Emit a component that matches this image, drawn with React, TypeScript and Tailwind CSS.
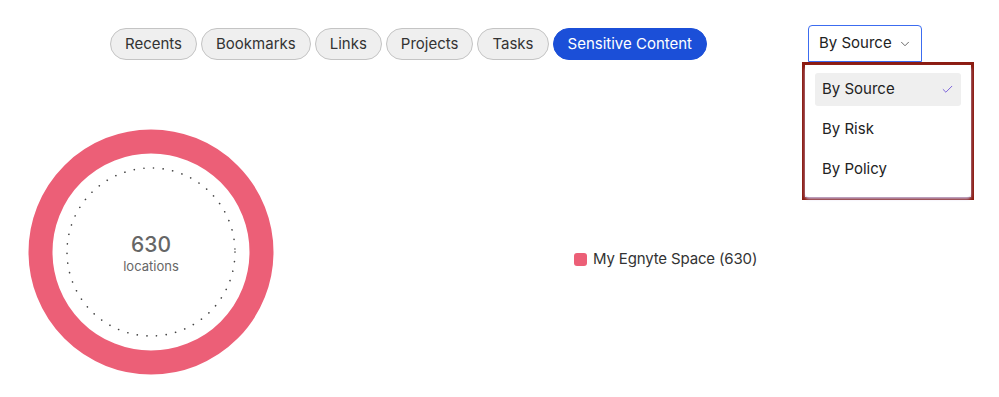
import { Check, ChevronDown } from 'lucide-react';

const tabs = ['Recents', 'Bookmarks', 'Links', 'Projects', 'Tasks', 'Sensitive Content'];
const options = ['By Source', 'By Risk', 'By Policy'];

function Donut() {
  return (
    <div className="relative w-[246px] h-[246px]">
      <svg width="246" height="246" viewBox="0 0 246 246">
        <circle cx="123" cy="123" r="110.5" fill="none" stroke="#ec5f77" strokeWidth="24" />
        <circle
          cx="123"
          cy="123"
          r="84"
          fill="none"
          stroke="#444"
          strokeWidth="1.6"
          strokeDasharray="0.1 9.6"
          strokeLinecap="round"
        />
      </svg>
      <div className="absolute inset-0 flex flex-col items-center justify-center pt-[3px] text-[#666]">
        <span className="text-[21px] leading-[24px] font-medium">630</span>
        <span className="text-[13px] leading-[16px] mt-[1px]">locations</span>
      </div>
    </div>
  );
}

export default function App() {
  return (
    <div className="w-[999px] h-[397px] bg-white overflow-hidden font-['Inter',sans-serif] text-[#333]">
      <div className="flex items-center h-[87px] pt-[1px]">
        <div className="flex items-center gap-[4px] pl-[110px]">
          {tabs.map((t) =>
            t === 'Sensitive Content' ? (
              <button
                key={t}
                className="h-[32px] px-[14px] rounded-full bg-[#1b4fd8] text-white text-[15px] border border-[#1b4fd8]"
              >
                {t}
              </button>
            ) : (
              <button
                key={t}
                className="h-[32px] px-[14px] rounded-full bg-[#efefef] border border-[#c4c4c4] text-[#333] text-[15px]"
              >
                {t}
              </button>
            )
          )}
        </div>
        <div className="relative ml-auto mr-[77px] mt-[-1px]">
          <button className="flex items-center h-[37px] w-[114px] pl-[10px] pr-[9px] border border-[#3c6cf0] rounded-t-[4px] text-[15px] text-[#222]">
            By Source
            <ChevronDown size={14} strokeWidth={1.5} className="ml-auto text-[#555]" />
          </button>
          <div className="absolute left-[-6px] top-[37px] w-[172px] h-[138px] border-[3px] border-[#8c1c12]">
            <div className="w-full h-full bg-white rounded-[4px] shadow-[0_2px_3px_rgba(200,195,235,0.9)] px-[10px] pt-[8px]">
              {options.map((o, i) => (
                <div
                  key={o}
                  className={`flex items-center h-[33px] px-[7px] mb-[7px] rounded-[3px] text-[15px] text-[#222] ${
                    i === 0 ? 'bg-[#efefef]' : ''
                  }`}
                >
                  {o}
                  {i === 0 && <Check size={13} strokeWidth={1.6} className="ml-auto text-[#6b4fd8]" />}
                </div>
              ))}
            </div>
          </div>
        </div>
      </div>
      <div className="flex items-center pl-[28px] pt-[42px]">
        <Donut />
        <div className="flex items-center ml-[300px] mt-[14px] gap-[6px] text-[15px] tracking-[-0.15px] text-[#333]">
          <span className="w-[13px] h-[13px] rounded-[3px] bg-[#ec5f77]" />
          <span>My Egnyte Space (630)</span>
        </div>
      </div>
    </div>
  );
}
